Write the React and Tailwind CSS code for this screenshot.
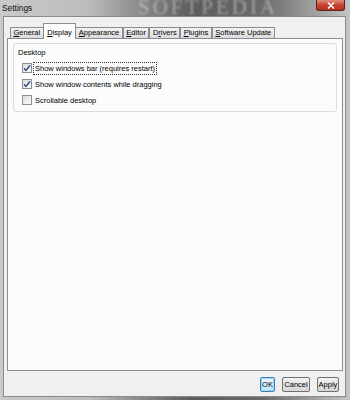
import { useState } from 'react';

const tabs = [
  { label: 'General', u: 'G' },
  { label: 'Display', u: 'D' },
  { label: 'Appearance', u: 'A' },
  { label: 'Editor', u: 'E' },
  { label: 'Drivers', u: 'r' },
  { label: 'Plugins', u: 'P' },
  { label: 'Software Update', u: 'S' },
];

function Mnemonic({ text, u }) {
  const i = text.indexOf(u);
  if (i < 0) return text;
  return (
    <>
      {text.slice(0, i)}
      <span className="underline underline-offset-1">{text[i]}</span>
      {text.slice(i + 1)}
    </>
  );
}

function Check({ checked, label, focused, onToggle }) {
  return (
    <div className="flex items-center h-[16px] pl-[8px] gap-[2px] cursor-default" onClick={onToggle}>
      <span className="w-[10px] h-[10px] border border-[#8e8f8f] bg-gradient-to-br from-[#dcdcdc] to-[#fdfdfd] flex items-center justify-center">
        {checked && (
          <svg width="8" height="8" viewBox="0 0 8 8">
            <path d="M1 4.2 L3 6.4 L7 1.2" fill="none" stroke="#2d4a86" strokeWidth="1.4" />
          </svg>
        )}
      </span>
      <span className={`px-[1px] leading-[11px] ${focused ? 'outline outline-1 outline-dotted outline-[#333]' : ''}`}>{label}</span>
    </div>
  );
}

export default function App() {
  const [active, setActive] = useState(1);
  const [opts, setOpts] = useState([true, true, false]);
  const labels = ['Show windows bar (requires restart)', 'Show window contents while dragging', 'Scrollable desktop'];

  return (
    <div
      className="w-[350px] h-[400px] flex flex-col text-[#000] text-[7.5px] overflow-hidden relative"
      style={{ fontFamily: '"Liberation Sans", Arial, sans-serif', background: 'linear-gradient(90deg,#c9c9c9 0%,#bdbdbd 25%,#8a8a8a 40%,#5c5c5c 55%,#6a6a6a 75%,#9a9a9a 88%,#c4c4c4 100%)' }}
    >
      {/* title bar */}
      <div className="h-[16px] flex justify-between items-start relative shrink-0 overflow-hidden">
        <span className="pl-[2px] pt-[2px] text-[8.4px] text-[#111] relative z-10">Settings</span>
        <span
          className="absolute left-[138px] -top-[3px] text-[21px] leading-none tracking-[3px] text-white/40 blur-[1px] select-none"
          style={{ fontFamily: '"Liberation Serif", serif' }}
        >
          SOFTPEDIA
        </span>
        <div className="mr-[5px] w-[29px] h-[11px] rounded-b-[3px] border border-[#5a2620] border-t-0 bg-gradient-to-b from-[#e08a7c] via-[#c7432f] to-[#b52e1a] flex items-center justify-center relative z-10">
          <svg width="8" height="7" viewBox="0 0 8 7">
            <path d="M1 0.5 L7 6.5 M7 0.5 L1 6.5" stroke="#fff" strokeWidth="1.6" />
          </svg>
        </div>
      </div>

      {/* client area */}
      <div className="flex-1 ml-[3px] mr-[4px] mb-[3px] bg-[#f0f0f0] border border-[#8a8a8a] flex flex-col pl-[3px] pr-[2px] pt-[5px] relative">
        <div className="flex items-end pl-[3px] h-[16px] relative z-10">
          {tabs.map((t, i) =>
            i === active ? (
              <div
                key={t.label}
                className="h-[16px] -mb-px px-[3.5px] pt-[3px] bg-[#fcfcfc] border border-[#898c95] border-b-0 -mx-[1px] relative z-10"
              >
                <Mnemonic text={t.label} u={t.u} />
              </div>
            ) : (
              <div
                key={t.label}
                onClick={() => setActive(i)}
                className="h-[11px] px-[2.5px] leading-[10px] bg-gradient-to-b from-[#f2f2f2] to-[#dcdcdc] border border-[#898c95] border-b-0 cursor-default"
              >
                <Mnemonic text={t.label} u={t.u} />
              </div>
            )
          )}
        </div>

        <div className="h-[333px] border border-[#898c95] bg-[#fcfcfc] px-[5px] pt-[4px]">
          {active === 1 && (
            <div className="h-[69px] border border-[#d5dfe5] rounded-[3px] pt-[3px]">
              <div className="pl-[4px] h-[13px]">Desktop</div>
              {labels.map((l, i) => (
                <Check
                  key={l}
                  label={l}
                  checked={opts[i]}
                  focused={i === 0}
                  onToggle={() => setOpts(o => o.map((v, j) => (j === i ? !v : v)))}
                />
              ))}
            </div>
          )}
        </div>

        <div className="flex justify-end gap-[7px] pr-[4px] pt-[6px]">
          <button className="h-[15px] w-[15px] rounded-[2px] border border-[#3c7fb1] bg-gradient-to-b from-[#eaf6fd] to-[#bee6fd] text-[7.5px] leading-none shadow-[inset_0_0_0_1px_#9ed6fa]">
            OK
          </button>
          <button className="h-[15px] w-[28px] rounded-[2px] border border-[#707070] bg-gradient-to-b from-[#f2f2f2] to-[#d5d5d5] text-[7.5px] leading-none">
            Cancel
          </button>
          <button className="h-[15px] w-[22px] rounded-[2px] border border-[#707070] bg-gradient-to-b from-[#f2f2f2] to-[#d5d5d5] text-[7.5px] leading-none">
            Apply
          </button>
        </div>
      </div>
    </div>
  );
}
